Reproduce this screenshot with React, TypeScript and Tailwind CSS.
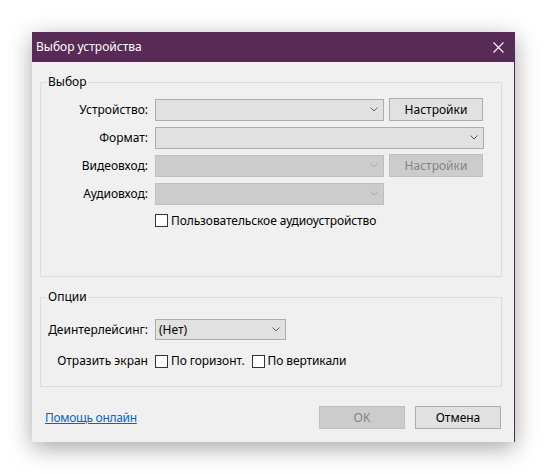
import React from "react";

const font = { fontFamily: '"Noto Sans", "Open Sans", sans-serif' };

function Chevron({ disabled }: { disabled?: boolean }) {
  return (
    <svg width="8" height="5" viewBox="0 0 8 5" className="shrink-0">
      <polyline
        points="0.5,0.5 4,4 7.5,0.5"
        fill="none"
        stroke={disabled ? "#a8a8a8" : "#5c5c5c"}
        strokeWidth="1"
      />
    </svg>
  );
}

function Combo({ width, value, disabled }: { width: string; value?: string; disabled?: boolean }) {
  return (
    <div
      className={`flex h-[22px] items-center justify-between border pl-[3px] pr-[5px] ${width} ${
        disabled ? "border-[#bfbfbf] bg-[#cccccc]" : "border-[#adadad] bg-[#e1e1e1]"
      }`}
    >
      <span className="text-[12px] leading-none text-black">{value}</span>
      <Chevron disabled={disabled} />
    </div>
  );
}

function Button({ label, disabled, width }: { label: string; disabled?: boolean; width: string }) {
  return (
    <div
      className={`flex h-[23px] items-center justify-center border text-[12px] ${width} ${
        disabled ? "border-[#bfbfbf] bg-[#cccccc] text-[#838383]" : "border-[#adadad] bg-[#e1e1e1] text-black"
      }`}
    >
      {label}
    </div>
  );
}

function Check({ label }: { label: string }) {
  return (
    <div className="flex items-center gap-[3px]">
      <div className="h-[13px] w-[13px] border border-[#333333] bg-white" />
      <span className="text-[12px] leading-none tracking-[-0.1px] text-black">{label}</span>
    </div>
  );
}

function Row({ label, children }: { label: string; children: React.ReactNode }) {
  return (
    <div className="flex h-[23px] items-center">
      <span className="w-[107px] text-right text-[12px] text-black">{label}</span>
      <div className="ml-[7px] flex items-center gap-[5px]">{children}</div>
    </div>
  );
}

export default function App() {
  return (
    <div className="min-h-screen bg-white pl-[32px] pt-[32px]" style={font}>
      <div className="flex h-[410px] w-[483px] flex-col border-r border-[#582a56] bg-[#f0f0f0] shadow-[0_6px_22px_rgba(0,0,0,0.35)]">
        <div className="flex h-[30px] shrink-0 items-center justify-between bg-[#582a56] pl-[4px] pr-[10px]">
          <span className="text-[12px] text-white">Выбор устройства</span>
          <svg width="11" height="11" viewBox="0 0 11 11">
            <path d="M0.5 0.5 L10.5 10.5 M10.5 0.5 L0.5 10.5" stroke="#ffffff" strokeWidth="1.1" />
          </svg>
        </div>

        <div className="flex flex-1 flex-col pl-[8px]">
          <div className="relative mt-[20px] h-[195px] w-[462px] border border-[#dcdcdc] pt-[15px]">
            <span className="absolute left-[6px] top-[-9px] bg-[#f0f0f0] px-[1px] text-[12px] leading-[16px] text-black">
              Выбор
            </span>
            <div className="flex flex-col gap-[5px]">
              <Row label="Устройство:">
                <Combo width="w-[229px]" />
                <Button label="Настройки" width="w-[94px]" />
              </Row>
              <Row label="Формат:">
                <Combo width="w-[329px]" />
              </Row>
              <Row label="Видеовход:">
                <Combo width="w-[229px]" disabled />
                <Button label="Настройки" width="w-[94px]" disabled />
              </Row>
              <Row label="Аудиовход:">
                <Combo width="w-[229px]" disabled />
              </Row>
            </div>
            <div className="ml-[114px] mt-[9px]">
              <Check label="Пользовательское аудиоустройство" />
            </div>
          </div>

          <div className="relative mt-[20px] h-[90px] w-[462px] border border-[#dcdcdc] pt-[21px]">
            <span className="absolute left-[6px] top-[-9px] bg-[#f0f0f0] px-[1px] text-[12px] leading-[16px] text-black">
              Опции
            </span>
            <div className="flex h-[21px] items-center">
              <span className="w-[107px] text-right text-[12px] text-black">Деинтерлейсинг:</span>
              <div className="ml-[7px] flex h-[21px] w-[131px] items-center justify-between border border-[#adadad] bg-[#e1e1e1] pl-[3px] pr-[5px]">
                <span className="text-[12px] leading-none text-black">(Нет)</span>
                <Chevron />
              </div>
            </div>
            <div className="mt-[12px] flex items-center">
              <span className="w-[107px] text-right text-[12px] text-black">Отразить экран</span>
              <div className="ml-[7px] flex items-center gap-[7px]">
                <Check label="По горизонт." />
                <Check label="По вертикали" />
              </div>
            </div>
          </div>

          <div className="mt-[19px] flex w-[461px] items-center justify-between">
            <a href="#" className="ml-[5px] text-[12px] tracking-[-0.3px] text-[#0066cc] underline">
              Помощь онлайн
            </a>
            <div className="flex gap-[10px]">
              <Button label="OK" width="w-[86px]" disabled />
              <Button label="Отмена" width="w-[86px]" />
            </div>
          </div>
        </div>
      </div>
    </div>
  );
}
